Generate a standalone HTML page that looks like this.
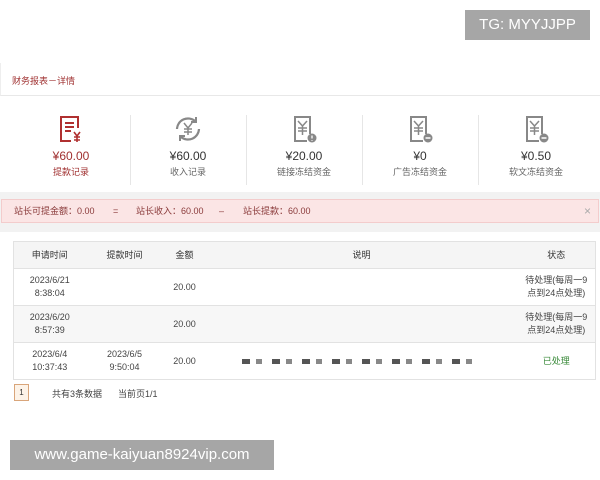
<!DOCTYPE html>
<html><head><meta charset="utf-8"><style>
*{margin:0;padding:0;box-sizing:border-box}
body{width:600px;height:480px;background:#fff;position:relative;overflow:hidden;font-family:"Liberation Sans","Noto Sans CJK SC",sans-serif;color:#333}
.a{position:absolute}
.wm{background:#a6a6a6;color:#fff;font-size:15px;line-height:30px;text-align:center}
.stat{position:absolute;top:114px;width:116px;text-align:center}
.stat svg{display:block;margin:0 auto}
.stat .v{font-size:12px;margin-top:5px;color:#333}
.stat .l{font-size:9px;color:#666;margin-top:2px}
.div{position:absolute;top:115px;width:1px;height:70px;background:#e6e6e6}
table{border-collapse:collapse;font-size:9px;color:#444;position:absolute;left:13px;top:241px;width:583px}
td,th{border-top:1px solid #e2e2e2;text-align:center;line-height:13px;font-weight:normal}
th{background:#f5f5f5;height:27px;color:#333}
td{height:37px}
</style></head><body>
<div class="a wm" style="left:465px;top:10px;width:125px;height:30px">TG: MYYJJPP</div>
<div class="a" style="left:0;top:63px;width:600px;height:33px;border-bottom:1px solid #e8e8e8;border-left:1px solid #eee"></div>
<div class="a" style="left:12px;top:74px;font-size:9px;color:#a03232">财务报表－详情</div>

<div class="stat" style="left:13px">
<svg width="30" height="30" viewBox="0 0 30 30"><path d="M22 14V3H5v24h10" fill="none" stroke="#b03030" stroke-width="2"/><path d="M9 9h9M9 13h9M9 17h6" stroke="#b03030" stroke-width="2"/><path d="M18 18l3 4 3-4M21 22v6M18 23h6M18 26h6" fill="none" stroke="#b03030" stroke-width="1.6"/></svg>
<div class="v" style="color:#a03030">¥60.00</div><div class="l" style="color:#a03030">提款记录</div></div>
<div class="div" style="left:130px"></div>
<div class="stat" style="left:130px">
<svg width="30" height="30" viewBox="0 0 30 30"><path d="M4 15a11 11 0 0 1 18-8M26 15a11 11 0 0 1-18 8" fill="none" stroke="#888" stroke-width="2.2"/><path d="M23 3v5h-5M7 27v-5h5" fill="none" stroke="#888" stroke-width="2"/><path d="M11 9l4 5 4-5M15 14v7M11 15h8M11 18h8" fill="none" stroke="#888" stroke-width="1.5"/></svg>
<div class="v">¥60.00</div><div class="l">收入记录</div></div>
<div class="div" style="left:246px"></div>
<div class="stat" style="left:246px">
<svg width="30" height="30" viewBox="0 0 30 30"><path d="M21 20V3H6v24h12" fill="none" stroke="#888" stroke-width="2"/><path d="M9 7l4.5 5 4.5-5M13.5 12v9M9 14h9M9 17h9" fill="none" stroke="#888" stroke-width="1.5"/><circle cx="23" cy="24" r="4.5" fill="#888"/><path d="M23 21.5v3M23 26v.8" stroke="#fff" stroke-width="1.3"/></svg>
<div class="v">¥20.00</div><div class="l">链接冻结资金</div></div>
<div class="div" style="left:362px"></div>
<div class="stat" style="left:362px">
<svg width="30" height="30" viewBox="0 0 30 30"><path d="M21 20V3H6v24h12" fill="none" stroke="#888" stroke-width="2"/><path d="M9 7l4.5 5 4.5-5M13.5 12v9M9 14h9M9 17h9" fill="none" stroke="#888" stroke-width="1.5"/><circle cx="23" cy="24" r="4.5" fill="#888"/><path d="M20.5 24h5" stroke="#fff" stroke-width="1.5"/></svg>
<div class="v">¥0</div><div class="l">广告冻结资金</div></div>
<div class="div" style="left:478px"></div>
<div class="stat" style="left:478px">
<svg width="30" height="30" viewBox="0 0 30 30"><path d="M21 20V3H6v24h12" fill="none" stroke="#888" stroke-width="2"/><path d="M9 7l4.5 5 4.5-5M13.5 12v9M9 14h9M9 17h9" fill="none" stroke="#888" stroke-width="1.5"/><circle cx="23" cy="24" r="4.5" fill="#888"/><path d="M20.5 24h5" stroke="#fff" stroke-width="1.5"/></svg>
<div class="v">¥0.50</div><div class="l">软文冻结资金</div></div>

<div class="a" style="left:0;top:192px;width:600px;height:40px;background:#f2f2f2"></div>
<div class="a" style="left:1px;top:199px;width:598px;height:24px;background:#fbe5e5;border:1px solid #f3cccc;font-size:9px;color:#8a3a3a;line-height:22px">
<span style="position:absolute;left:12px">站长可提金额：0.00</span>
<span style="position:absolute;left:111px">=</span>
<span style="position:absolute;left:134px">站长收入：60.00</span>
<span style="position:absolute;left:217px">–</span>
<span style="position:absolute;left:241px">站长提款：60.00</span>
<span style="position:absolute;left:582px;color:#aaa;font-size:12px">×</span></div>

<table style="border:1px solid #e2e2e2">
<tr><th style="width:72px">申请时间</th><th style="width:78px">提款时间</th><th style="width:42px">金额</th><th>说明</th><th style="width:78px">状态</th></tr>
<tr><td>2023/6/21<br>8:38:04</td><td></td><td>20.00</td><td></td><td>待处理(每周一9<br>点到24点处理)</td></tr>
<tr style="background:#f7f7f7"><td>2023/6/20<br>8:57:39</td><td></td><td>20.00</td><td></td><td>待处理(每周一9<br>点到24点处理)</td></tr>
<tr><td>2023/6/4<br>10:37:43</td><td>2023/6/5<br>9:50:04</td><td>20.00</td><td><span style="display:inline-block;width:240px;height:5px;background:repeating-linear-gradient(90deg,#555 0 8px,#fff 8px 14px,#888 14px 20px,#fff 20px 30px)"></span></td><td style="color:#3a8a3a">已处理</td></tr>
</table>
<div class="a" style="left:14px;top:384px;width:15px;height:17px;border:1px solid #d9a57a;background:#fdf3e8;font-size:8px;text-align:center;line-height:15px">1</div>
<div class="a" style="left:52px;top:387px;font-size:9px;color:#444">共有3条数据</div>
<div class="a" style="left:118px;top:387px;font-size:9px;color:#444">当前页1/1</div>

<div class="a wm" style="left:10px;top:440px;width:264px;height:30px">www.game-kaiyuan8924vip.com</div>
</body></html>
